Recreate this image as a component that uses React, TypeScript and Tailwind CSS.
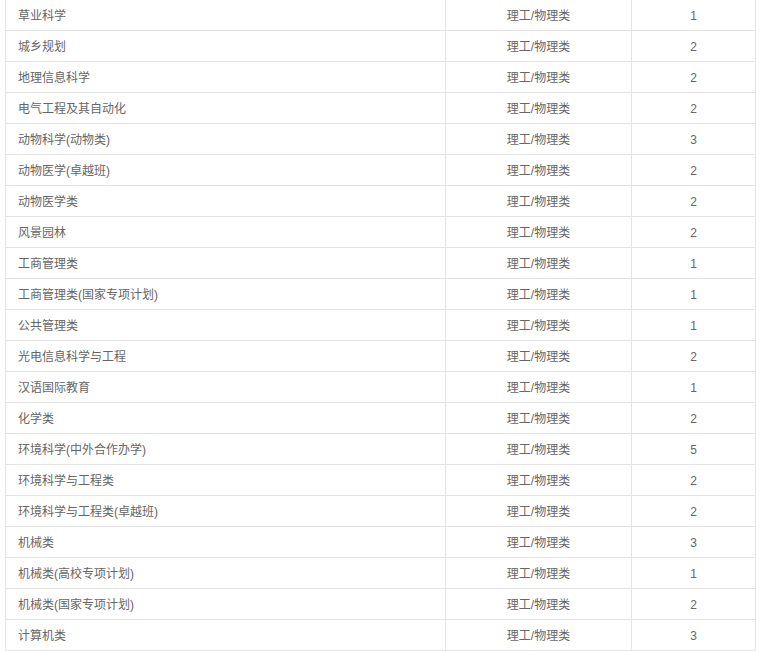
const rows: [string, string, string][] = [
  ['草业科学', '理工/物理类', '1'],
  ['城乡规划', '理工/物理类', '2'],
  ['地理信息科学', '理工/物理类', '2'],
  ['电气工程及其自动化', '理工/物理类', '2'],
  ['动物科学(动物类)', '理工/物理类', '3'],
  ['动物医学(卓越班)', '理工/物理类', '2'],
  ['动物医学类', '理工/物理类', '2'],
  ['风景园林', '理工/物理类', '2'],
  ['工商管理类', '理工/物理类', '1'],
  ['工商管理类(国家专项计划)', '理工/物理类', '1'],
  ['公共管理类', '理工/物理类', '1'],
  ['光电信息科学与工程', '理工/物理类', '2'],
  ['汉语国际教育', '理工/物理类', '1'],
  ['化学类', '理工/物理类', '2'],
  ['环境科学(中外合作办学)', '理工/物理类', '5'],
  ['环境科学与工程类', '理工/物理类', '2'],
  ['环境科学与工程类(卓越班)', '理工/物理类', '2'],
  ['机械类', '理工/物理类', '3'],
  ['机械类(高校专项计划)', '理工/物理类', '1'],
  ['机械类(国家专项计划)', '理工/物理类', '2'],
  ['计算机类', '理工/物理类', '3'],
]

export default function App() {
  return (
    <div className="w-[762px] h-[651px] bg-white overflow-hidden font-['Liberation_Sans','Noto_Sans_CJK_SC',sans-serif] text-[12px] text-[#666]">
      <div className="ml-[5px] w-[751px] border-r border-[#e4e4e4]">
        {rows.map(([name, type, n], i) => (
          <div key={i} className="flex h-[31px] border-b border-[#e4e4e4]">
            <div className="w-[440px] border-l border-[#e4e4e4] pl-3 pt-[2px] flex items-center">{name}</div>
            <div className="w-[186px] border-l border-[#e4e4e4] pt-[2px] flex items-center justify-center">{type}</div>
            <div className="w-[124px] border-l border-[#e4e4e4] pt-[2px] flex items-center justify-center">{n}</div>
          </div>
        ))}
      </div>
    </div>
  )
}
